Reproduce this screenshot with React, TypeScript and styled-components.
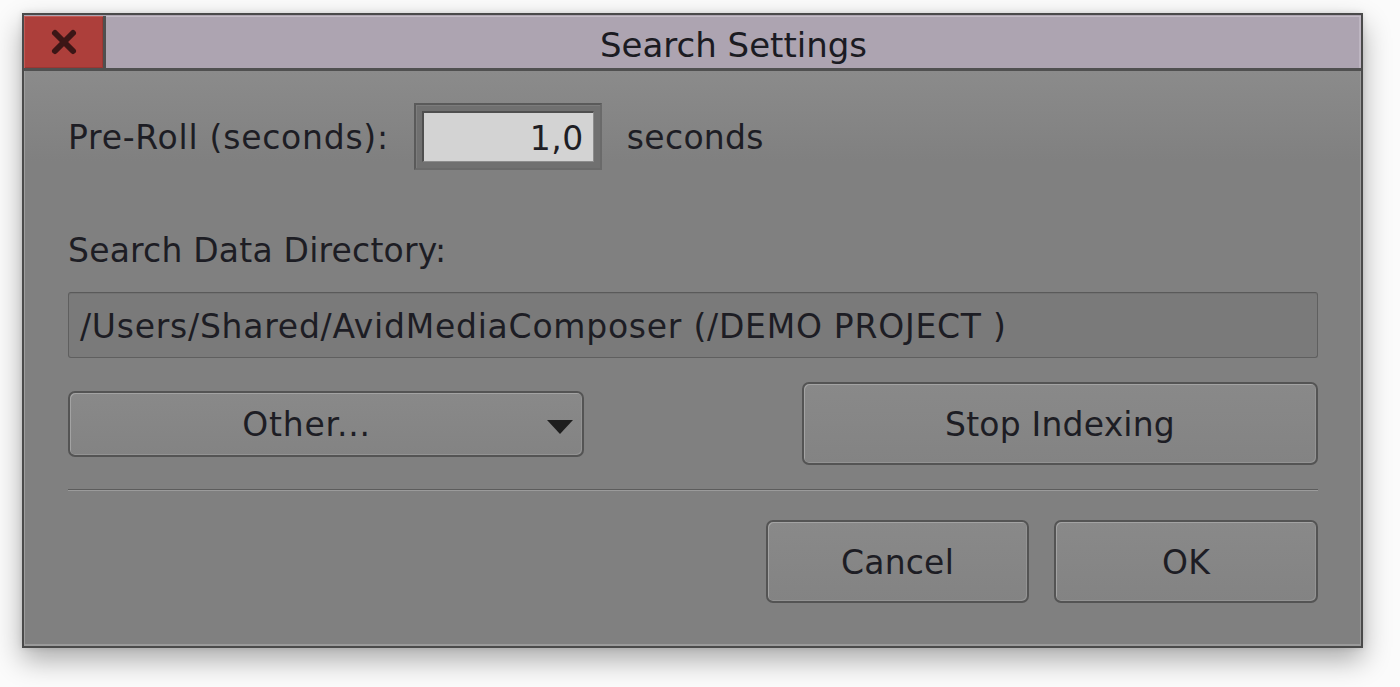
import React from "react";
import styled, { createGlobalStyle } from "styled-components";

const GlobalStyle = createGlobalStyle`
  html, body {
    margin: 0;
    padding: 0;
    background: #fbfbfb;
  }
  * { box-sizing: border-box; }
  body {
    font-family: "DejaVu Sans", "Liberation Sans", sans-serif;
    color: #1d1d24;
  }
`;

const Stage = styled.div`
  width: 1400px;
  height: 687px;
  padding: 13px 0 0 22px;
  overflow: hidden;
`;

const Window = styled.div`
  width: 1341px;
  height: 635px;
  display: flex;
  flex-direction: column;
  border: 2px solid #4a4a4a;
  background: #808080;
  box-shadow: 0 12px 26px rgba(0, 0, 0, 0.32), 0 0 6px rgba(0, 0, 0, 0.12);
`;

const TitleBar = styled.div`
  display: flex;
  height: 56px;
  padding-top: 1px;
  border-bottom: 3px solid #505050;
  background: #ada4b1;
`;

const CloseButton = styled.button`
  width: 82px;
  height: 100%;
  margin: 0;
  padding: 0;
  display: flex;
  align-items: center;
  justify-content: center;
  background: #ad3f3b;
  border: none;
  border-right: 3px solid #4f4f4f;
  box-shadow: inset 1px 1px 0 #c45a55, inset -1px -1px 0 #9a3733;
  cursor: pointer;
`;

const TitleArea = styled.div`
  flex: 1;
  display: flex;
  align-items: center;
  justify-content: center;
  font-size: 34px;
  color: #1b1b22;
  box-shadow: inset 0 1px 0 #c4bdc7, inset -2px 0 0 #bdb5c1;
  padding-top: 5px;
`;

const Body = styled.div`
  flex: 1;
  display: flex;
  flex-direction: column;
  padding: 32px 43px 0 44px;
  background: linear-gradient(#8b8b8b 0px, #808080 90px, #808080 100%);
  box-shadow: inset 1px 0 0 #9d9d9d, inset 0 -2px 0 #9a9a9a, inset -1px 0 0 #9a9a9a;
`;

const Row = styled.div`
  display: flex;
  align-items: center;
  height: 67px;
`;

const Label = styled.span<{ $gap?: number; $spacing?: number }>`
  font-size: 33px;
  line-height: 40px;
  letter-spacing: ${(p) => p.$spacing ?? 0.75}px;
  padding-top: 3px;
  margin-left: ${(p) => p.$gap ?? 0}px;
  white-space: nowrap;
`;

const NumberFrame = styled.div`
  width: 188px;
  height: 67px;
  margin-left: 25px;
  padding: 6px;
  background: #707070;
  border: 2px solid #5a5a5a;
  border-right-color: #6a6a6a;
  border-bottom-color: #6a6a6a;
  box-shadow: inset 1px 1px 0 #7c7c7c;
`;

const NumberField = styled.div`
  width: 100%;
  height: 100%;
  display: flex;
  align-items: center;
  justify-content: flex-end;
  padding: 3px 9px 0 0;
  background: #d3d3d3;
  border-top: 2px solid #4f4f4f;
  border-left: 2px solid #4f4f4f;
  border-right: 1px solid #8c8c8c;
  border-bottom: 1px solid #8c8c8c;
  font-size: 33px;
  letter-spacing: 0.5px;
  color: #1e1e24;
`;

const SectionLabel = styled(Label)`
  margin-top: 58px;
`;

const PathField = styled.div`
  margin-top: 21px;
  height: 66px;
  display: flex;
  align-items: center;
  padding: 2px 0 0 11px;
  background: #7a7a7a;
  border: 1px solid #5f5f5f;
  border-top-color: #5a5a5a;
  border-radius: 3px;
  box-shadow: inset 0 1px 0 #727272;
  font-size: 33px;
  letter-spacing: 0.75px;
  white-space: nowrap;
`;

const ButtonRow = styled.div<{ $top: number; $justify: string }>`
  margin-top: ${(p) => p.$top}px;
  height: 83px;
  display: flex;
  align-items: center;
  justify-content: ${(p) => p.$justify};
  gap: 25px;
`;

const Button = styled.button<{ $w: number; $h: number }>`
  width: ${(p) => p.$w}px;
  height: ${(p) => p.$h}px;
  margin: 0;
  padding: 2px 0 0 0;
  display: flex;
  align-items: center;
  justify-content: center;
  font-family: "DejaVu Sans", "Liberation Sans", sans-serif;
  font-size: 33px;
  letter-spacing: 0.2px;
  color: #1d1d24;
  background: linear-gradient(#898989, #838383);
  border: 2px solid #545454;
  border-radius: 7px;
  box-shadow: inset 1px 1px 0 #a3a3a3, inset -1px -1px 0 #939393;
  cursor: pointer;
`;

const DropText = styled.span`
  flex: 1;
  text-align: center;
  letter-spacing: 0.8px;
  padding-right: 4px;
`;

const DropArrow = styled.svg`
  width: 26px;
  height: 14px;
  margin-right: 9px;
  margin-top: 4px;
`;

const Separator = styled.div`
  margin-top: 24px;
  height: 2px;
  border-top: 1px solid #5c5c5c;
  border-bottom: 1px solid #9b9b9b;
`;

export default function App() {
  return (
    <>
      <GlobalStyle />
      <Stage>
        <Window>
          <TitleBar>
            <CloseButton aria-label="Close">
              <svg width="30" height="30" viewBox="0 0 30 30">
                <line x1="6" y1="6" x2="24" y2="24" stroke="#3c1616" strokeWidth="6" strokeLinecap="round" />
                <line x1="24" y1="6" x2="6" y2="24" stroke="#3c1616" strokeWidth="6" strokeLinecap="round" />
              </svg>
            </CloseButton>
            <TitleArea>Search Settings</TitleArea>
          </TitleBar>
          <Body>
            <Row>
              <Label>Pre-Roll (seconds):</Label>
              <NumberFrame>
                <NumberField>1,0</NumberField>
              </NumberFrame>
              <Label $gap={25} $spacing={0.3}>seconds</Label>
            </Row>
            <SectionLabel $spacing={0.2}>Search Data Directory:</SectionLabel>
            <PathField>/Users/Shared/AvidMediaComposer (/DEMO PROJECT )</PathField>
            <ButtonRow $top={24} $justify="space-between">
              <Button $w={516} $h={66}>
                <DropText>Other...</DropText>
                <DropArrow viewBox="0 0 26 14">
                  <polygon points="0,0 26,0 13,14" fill="#1e1e1e" />
                </DropArrow>
              </Button>
              <Button $w={516} $h={83}>Stop Indexing</Button>
            </ButtonRow>
            <Separator />
            <ButtonRow $top={29} $justify="flex-end">
              <Button $w={263} $h={83}>Cancel</Button>
              <Button $w={264} $h={83}>OK</Button>
            </ButtonRow>
          </Body>
        </Window>
      </Stage>
    </>
  );
}
